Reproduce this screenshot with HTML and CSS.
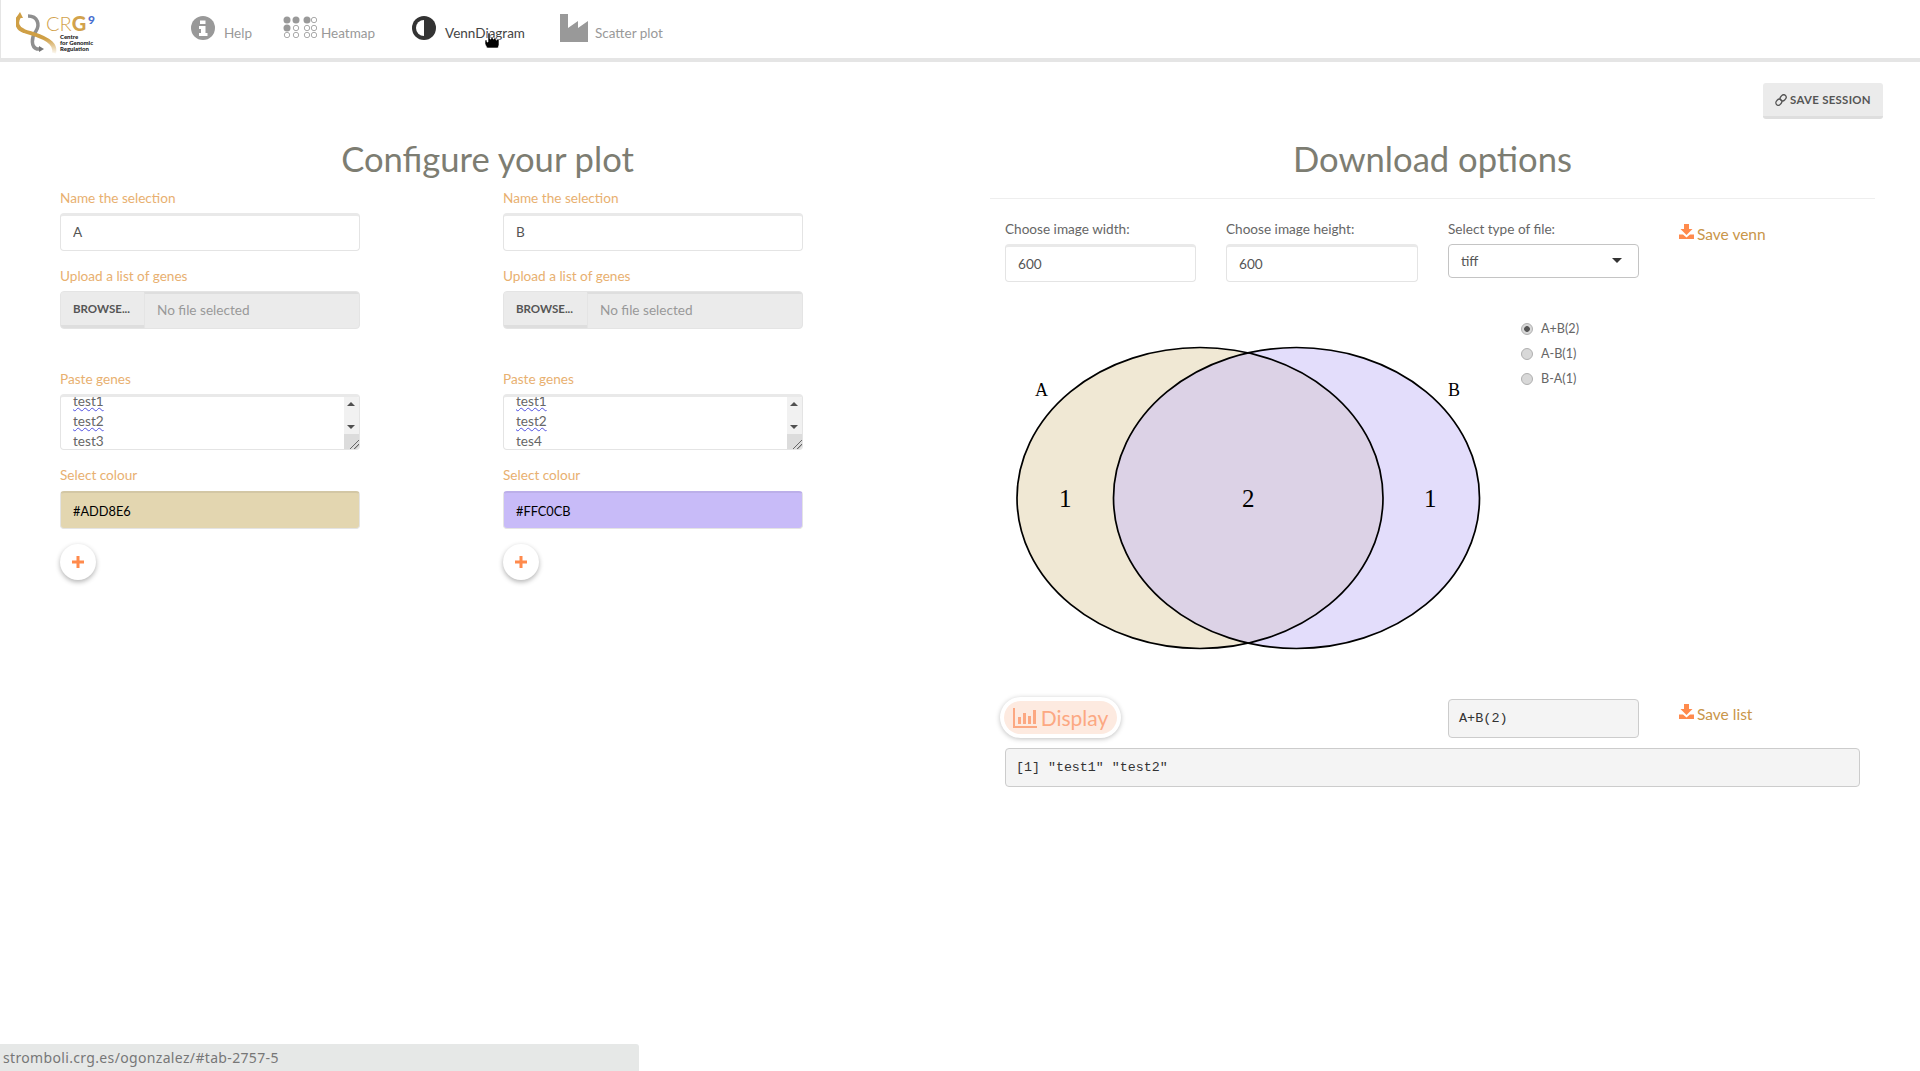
FILE: index.html
```html
<!DOCTYPE html>
<html lang="en">
<head>
  <meta charset="UTF-8">
  <title>VennDiagram</title>
  <link rel="stylesheet" href="styles.css">
</head>

<body>
  <nav class="navbar">
    <svg class="logo" width="80" height="45" viewBox="0 0 80 45">
      <defs>
        <linearGradient id="goldFade" x1="0" y1="0" x2="0" y2="1">
          <stop offset="0.6" stop-color="#cf9f45"/>
          <stop offset="1" stop-color="#cf9f45" stop-opacity="0.1"/>
        </linearGradient>
      </defs>
      <path d="M12 5 C22 5 24 14 20 20 C15 27 15 36 21 38 L24 38" fill="none" stroke="#8f8f8f" stroke-width="3.500"/>
      <path d="M23 35 L28 38 L23 41 Z" fill="#777"/>
      <path d="M3 6 C-1 12 2 18 8 20 C16 23 28 25 35 32 C38 35 39 38 38 42" fill="none" stroke="url(#goldFade)" stroke-width="4"/>
      <path d="M0 7 L4 1 L7 7 Z" fill="#cf9f45"/>
      <text class="logo-crg" x="30" y="20">CR<tspan class="logo-g">G</tspan></text>
      <text class="logo-mark" x="72" y="13">9</text>
      <text class="logo-sub" x="44" y="28">Centre</text>
      <text class="logo-sub" x="44" y="34">for Genomic</text>
      <text class="logo-sub" x="44" y="40">Regulation</text>
    </svg>

    <a class="nav-item nav-help">
      <svg width="24" height="24" viewBox="0 0 24 24">
        <circle cx="12" cy="12" r="12" fill="#999"/>
        <path d="M9 4.500h5.500v3.500H9z M8 10h6.500v7h2v3H8v-3h2v-4H8z" fill="#fff"/>
      </svg>
      <span>Help</span>
    </a>
    <a class="nav-item nav-heatmap">
      <svg width="34" height="22" viewBox="0 0 34 22">
        <g fill="#999">
          <circle cx="4" cy="4" r="3.500"/><circle cx="13" cy="4" r="3.500"/><circle cx="24" cy="4" r="3.500"/>
          <circle cx="4" cy="12" r="3.500"/>
        </g>
        <g fill="none" stroke="#aaa">
          <circle cx="31" cy="4" r="2.700"/>
          <circle cx="13" cy="12" r="2.700"/><circle cx="24" cy="12" r="2.700"/><circle cx="31" cy="12" r="2.700"/>
          <circle cx="4" cy="19" r="2.700"/><circle cx="13" cy="19" r="2.700"/><circle cx="24" cy="19" r="2.700"/><circle cx="31" cy="19" r="2.700"/>
        </g>
      </svg>
      <span>Heatmap</span>
    </a>
    <a class="nav-item nav-venn active">
      <svg width="24" height="24" viewBox="0 0 24 24">
        <circle cx="12" cy="12" r="12" fill="#333"/>
        <path d="M12 4 A8 8 0 0 0 12 20 Z" fill="#fff"/>
      </svg>
      <span>VennDiagram</span>
    </a>
    <a class="nav-item nav-scatter">
      <svg width="28" height="28" viewBox="0 0 28 28">
        <path d="M0 0 H8 V14 L18 7 V14 L28 7 V28 H0 Z" fill="#999"/>
      </svg>
      <span>Scatter plot</span>
    </a>
  </nav>

  <svg class="cursor" width="16" height="18" viewBox="0 0 16 18">
    <path d="M4 1 h2 v6 h1 v-2 h2 v2 h1 v-1 h2 v2 h1 v-1 h2 v6 l-1 3 H3 L1 12 V8 h2 v2 h1 Z" fill="#000" stroke="#fff" stroke-width=".6"/>
  </svg>

  <div class="session-row">
    <button class="session-btn">
      <svg width="12" height="12" viewBox="0 0 12 12">
        <g fill="none" stroke="#555" stroke-width="1.300">
          <rect x="5.500" y="0.500" width="5" height="6.500" rx="2.500" transform="rotate(40 8 4)"/>
          <rect x="1.500" y="5" width="5" height="6.500" rx="2.500" transform="rotate(40 4 8)"/>
        </g>
      </svg>
      SAVE SESSION
    </button>
  </div>

  <main class="columns">
    <section class="config">
      <h2>Configure your plot</h2>
      <div class="selections">
        <div class="selection">
          <div class="field">
            <label>Name the selection</label>
            <input class="text-input" type="text" value="A">
          </div>
          <div class="field field-file">
            <label>Upload a list of genes</label>
            <div class="file-input">
              <span class="browse">BROWSE...</span>
              <span class="file-name">No file selected</span>
            </div>
          </div>
          <div class="field">
            <label>Paste genes</label>
            <div class="textarea">
              <div class="lines">
                <div><u>test1</u></div>
                <div><u>test2</u></div>
                <div>test3</div>
              </div>
              <div class="scroll">
                <span class="arrow-up"></span>
                <span class="arrow-down"></span>
                <span class="resizer"></span>
              </div>
            </div>
          </div>
          <div class="field">
            <label>Select colour</label>
            <div class="colour-input colour-a">#ADD8E6</div>
          </div>
          <button class="add-btn">
            <svg width="12" height="12" viewBox="0 0 12 12"><path d="M4.500 0h3v4.500H12v3H7.500V12h-3V7.500H0v-3h4.500z" fill="#ff8a4c"/></svg>
          </button>
        </div>

        <div class="selection">
          <div class="field">
            <label>Name the selection</label>
            <input class="text-input" type="text" value="B">
          </div>
          <div class="field field-file">
            <label>Upload a list of genes</label>
            <div class="file-input">
              <span class="browse">BROWSE...</span>
              <span class="file-name">No file selected</span>
            </div>
          </div>
          <div class="field">
            <label>Paste genes</label>
            <div class="textarea">
              <div class="lines">
                <div><u>test1</u></div>
                <div><u>test2</u></div>
                <div>tes4</div>
              </div>
              <div class="scroll">
                <span class="arrow-up"></span>
                <span class="arrow-down"></span>
                <span class="resizer"></span>
              </div>
            </div>
          </div>
          <div class="field">
            <label>Select colour</label>
            <div class="colour-input colour-b">#FFC0CB</div>
          </div>
          <button class="add-btn">
            <svg width="12" height="12" viewBox="0 0 12 12"><path d="M4.500 0h3v4.500H12v3H7.500V12h-3V7.500H0v-3h4.500z" fill="#ff8a4c"/></svg>
          </button>
        </div>
      </div>
    </section>

    <section class="download">
      <h2>Download options</h2>
      <hr>
      <div class="dl-grid">
        <div class="dl-field">
          <label>Choose image width:</label>
          <input class="text-input" type="text" value="600">
        </div>
        <div class="dl-field">
          <label>Choose image height:</label>
          <input class="text-input" type="text" value="600">
        </div>
        <div class="dl-field">
          <label>Select type of file:</label>
          <div class="select">tiff<span class="caret"></span></div>
        </div>
        <a class="save-link save-venn">
          <svg width="15" height="15" viewBox="0 0 15 15"><path d="M5 0h5v5h3.500L7.500 11 1.500 5H5z M0 10.500h4l3.500 3 3.500-3h4V15H0z" fill="#ff8a4c"/></svg>
          Save venn
        </a>
      </div>

      <div class="venn-row">
        <svg class="venn" width="500" height="360" viewBox="0 0 500 360">
          <ellipse cx="195" cy="182" rx="183" ry="150.500" fill="#e3d6b0" fill-opacity=".55"/>
          <ellipse cx="291.500" cy="182" rx="183" ry="150.500" fill="#c8bbf8" fill-opacity=".5"/>
          <ellipse cx="195" cy="182" rx="183" ry="150.500" fill="none" stroke="#000" stroke-width="1.700"/>
          <ellipse cx="291.500" cy="182" rx="183" ry="150.500" fill="none" stroke="#000" stroke-width="1.700"/>
          <g class="venn-labels">
            <text x="30" y="80">A</text>
            <text x="443" y="80">B</text>
          </g>
          <g class="venn-counts">
            <text x="54" y="191">1</text>
            <text x="237" y="191">2</text>
            <text x="419" y="191">1</text>
          </g>
        </svg>
        <div class="radios">
          <label class="radio"><input type="radio" name="part" checked>A+B(2)</label>
          <label class="radio"><input type="radio" name="part">A-B(1)</label>
          <label class="radio"><input type="radio" name="part">B-A(1)</label>
        </div>
      </div>

      <div class="dl-grid dl-grid-list">
        <button class="display-btn">
          <span class="display-inner">
            <svg width="24" height="20" viewBox="0 0 24 20"><path d="M0 0h2v18h22v2H0z M5 9h3v7H5z M10 5h3v11h-3z M15 8h3v8h-3z M20 2h3v14h-3z" fill="#fca882"/></svg>
            Display
          </span>
        </button>
        <div></div>
        <div class="picked">A+B(2)</div>
        <a class="save-link save-list">
          <svg width="15" height="15" viewBox="0 0 15 15"><path d="M5 0h5v5h3.500L7.500 11 1.500 5H5z M0 10.500h4l3.500 3 3.500-3h4V15H0z" fill="#ff8a4c"/></svg>
          Save list
        </a>
      </div>
      <pre class="output">[1] "test1" "test2"</pre>
    </section>
  </main>

  <div class="status-bar">stromboli.crg.es/ogonzalez/#tab-2757-5</div>
</body>
</html>
```

FILE: styles.css
```css
* {
  box-sizing: border-box;
}

body {
  font-family: "Lato", sans-serif;
  font-size: 13.600px;
  margin: 0;
  min-height: 1071px;
  background: #fff;
  color: #555;
  overflow: hidden;
}

label {
  display: block;
}

/* top bar */
.navbar {
  display: flex;
  align-items: flex-start;
  height: 62px;
  padding-left: 15px;
  border-left: 1px solid #e5e5e5;
  border-bottom: 4px solid #e5e5e5;
}

.logo {
  display: block;
  flex: none;
  margin-top: 11px;
}

.logo-crg {
  font-family: "Lato", sans-serif;
  font-size: 20px;
  font-weight: 300;
  fill: #d2a24c;
}

.logo-g {
  font-weight: 900;
}

.logo-mark {
  font-family: "Lato", sans-serif;
  font-size: 12px;
  font-weight: 900;
  fill: #4a6fd0;
}

.logo-sub {
  font-family: "Lato", sans-serif;
  font-size: 6px;
  font-weight: 900;
  fill: #222;
}

.nav-item {
  display: flex;
  align-items: flex-start;
  color: #999;
  font-size: 13.500px;
  margin-top: 16px;
}

.nav-item span {
  margin-top: 8px;
  line-height: 18px;
}

.nav-help {
  margin-left: 95px;
  gap: 9px;
}

.nav-heatmap {
  margin-left: 31px;
  gap: 4px;
}

.nav-venn {
  margin-left: 37px;
  gap: 9px;
}

.nav-venn span {
  color: #444;
}

.nav-scatter {
  margin-left: 35px;
  margin-top: 14px;
  gap: 7px;
}

.nav-scatter span {
  margin-top: 10px;
}

.cursor {
  position: absolute;
  left: 484px;
  top: 32px;
}

/* save session */
.session-row {
  display: flex;
  justify-content: flex-end;
  padding: 21px 37px 0 0;
}

.session-btn {
  display: flex;
  align-items: center;
  justify-content: center;
  gap: 3px;
  width: 120px;
  height: 36px;
  background: #ebebeb;
  border: none;
  border-bottom: 3px solid #dedede;
  border-radius: 3px;
  font-family: "Lato", sans-serif;
  font-size: 11.400px;
  font-weight: 700;
  color: #555;
  letter-spacing: .3px;
}

/* columns */
.columns {
  display: flex;
}

h2 {
  margin: 0;
  font-size: 34.600px;
  font-weight: 400;
  line-height: 44px;
  text-align: center;
  color: #7d7d72;
}

.config {
  width: 855px;
  margin-left: 60px;
  padding-top: 18px;
}

.selections {
  display: flex;
  gap: 143px;
  margin-top: 7px;
}

.selection {
  width: 300px;
}

.field {
  margin-bottom: 15px;
}

.field-file {
  margin-bottom: 40px;
}

.field label {
  height: 20px;
  line-height: 20px;
  margin-bottom: 5px;
  color: #e8b070;
}

.text-input {
  display: block;
  width: 100%;
  height: 38px;
  padding: 0 12px 2px;
  background: #fff;
  border: 1px solid #e4e4e4;
  border-top: 3px solid #e9e9e9;
  border-radius: 4px;
  font-family: "Lato", sans-serif;
  font-size: 13.600px;
  color: #555;
}

.file-input {
  display: flex;
  height: 38px;
  border-radius: 4px;
  overflow: hidden;
  background: #ebebeb;
  border: 1px solid #e4e4e4;
}

.browse {
  width: 83px;
  height: 33px;
  line-height: 33px;
  padding-left: 12px;
  background: #ebebeb;
  font-size: 11.500px;
  font-weight: 700;
  color: #555;
  box-shadow: 0 3px 0 #dedede;
}

.file-name {
  flex: 1;
  padding: 6px 0 0 12px;
  line-height: 20px;
  color: #999;
  border-top: 2px solid #dedede;
  border-left: 1px solid #e4e4e4;
}

.textarea {
  display: flex;
  height: 56px;
  border: 1px solid #e4e4e4;
  border-top: 3px solid #e9e9e9;
  border-radius: 4px;
  overflow: hidden;
}

.lines {
  flex: 1;
  padding-left: 12px;
  margin-top: -6px;
  line-height: 20px;
  color: #666;
}

.lines u {
  text-decoration: underline wavy #5050e0 1px;
  text-underline-offset: 1px;
}

.scroll {
  position: relative;
  width: 15px;
  background: #f1f1f1;
}

.arrow-up,
.arrow-down {
  position: absolute;
  left: 3px;
  border-left: 4px solid transparent;
  border-right: 4px solid transparent;
}

.arrow-up {
  top: 5px;
  border-bottom: 4px solid #505050;
}

.arrow-down {
  top: 28px;
  border-top: 4px solid #505050;
}

.resizer {
  position: absolute;
  left: 0;
  right: 0;
  bottom: 0;
  height: 15px;
  background: linear-gradient(135deg, #dcdcdc 68%, #666 69%, #666 72%, #dcdcdc 73%, #dcdcdc 82%, #666 83%, #666 86%, #dcdcdc 87%);
}

.colour-input {
  height: 38px;
  margin-top: 6px;
  padding: 2px 12px 0;
  line-height: 32px;
  border: 1px solid #e4e4e4;
  border-radius: 4px;
  color: #000;
  font-size: 12.800px;
}

.colour-a {
  background: #e3d6b0;
  border-top: 2px solid #d3c7a5;
}

.colour-b {
  background: #c8bbf8;
  border-top: 2px solid #bcafe9;
}

.add-btn {
  display: flex;
  align-items: center;
  justify-content: center;
  width: 36px;
  height: 36px;
  padding: 0;
  background: #fff;
  border: none;
  border-radius: 50%;
  box-shadow: 0 2px 5px rgba(0,0,0,0.3);
}

/* download side */
.download {
  width: 885px;
  margin-left: 75px;
  padding-top: 18px;
}

hr {
  margin: 17px 0 0;
  border: none;
  border-top: 1px solid #eee;
}

.dl-grid {
  display: grid;
  grid-template-columns: 191px 192px 191px auto;
  column-gap: 30px;
  padding-left: 15px;
  margin-top: 20px;
}

.dl-field label {
  height: 20px;
  line-height: 20px;
  margin-bottom: 5px;
  color: #666;
}

.dl-field .text-input {
  padding-bottom: 0;
}

.select {
  position: relative;
  height: 34px;
  padding-left: 12px;
  line-height: 32px;
  border: 1px solid #c4c4c4;
  border-radius: 4px;
  color: #555;
}

.caret {
  position: absolute;
  right: 16px;
  top: 13px;
  border-left: 5px solid transparent;
  border-right: 5px solid transparent;
  border-top: 5px solid #333;
}

.save-link {
  display: flex;
  align-items: flex-start;
  gap: 3px;
  margin-left: 10px;
  font-size: 15.500px;
  line-height: 20px;
  color: #c9964a;
}

.save-venn {
  padding-top: 5px;
}

.save-list {
  padding-top: 7px;
}

.venn-row {
  display: flex;
  margin: 34px 0 0 15px;
}

.venn {
  display: block;
  flex: none;
}

.venn-labels text {
  font-family: "Liberation Serif", serif;
  font-size: 18px;
  fill: #000;
}

.venn-counts text {
  font-family: "Liberation Serif", serif;
  font-size: 25px;
  fill: #000;
}

.radios {
  margin-left: 16px;
}

.radio {
  display: flex;
  align-items: center;
  gap: 8px;
  height: 25px;
  color: #666;
  font-size: 12.600px;
}

.radio input {
  appearance: none;
  width: 12px;
  height: 12px;
  margin: 0;
  border: 1px solid #b0b0b0;
  border-radius: 50%;
  background: #d8d8d8;
}

.radio input:checked {
  background: radial-gradient(circle, #555 0, #555 2.500px, #d8d8d8 3.200px);
}

.dl-grid-list {
  margin-top: 21px;
  align-items: start;
}

.display-btn {
  width: 121px;
  height: 41px;
  margin-left: -5px;
  padding: 4px;
  background: #fff;
  border: none;
  border-radius: 21px;
  box-shadow: 0 1px 5px rgba(0,0,0,0.25);
}

.display-inner {
  display: flex;
  align-items: center;
  justify-content: center;
  gap: 4px;
  height: 33px;
  border-radius: 17px;
  background: #fdeae0;
  font-family: "Lato", sans-serif;
  font-size: 21px;
  color: #fca882;
}

.picked {
  height: 39px;
  margin-top: 2px;
  padding-left: 10px;
  line-height: 37px;
  background: #f4f4f4;
  border: 1px solid #ccc;
  border-radius: 4px;
  font-family: "Liberation Mono", monospace;
  font-size: 13.500px;
  color: #333;
}

.output {
  width: 855px;
  height: 39px;
  margin: 10px 0 0 15px;
  padding: 0 10px;
  line-height: 38px;
  background: #f4f4f4;
  border: 1px solid #ccc;
  border-radius: 4px;
  font-family: "Liberation Mono", monospace;
  font-size: 13.300px;
  color: #333;
}

.status-bar {
  position: fixed;
  left: 0;
  bottom: 0;
  width: 639px;
  height: 27px;
  padding-left: 3px;
  line-height: 28px;
  background: #e6e8e7;
  border-top-right-radius: 3px;
  font-family: "Noto Sans", sans-serif;
  font-size: 14px;
  letter-spacing: .34px;
  color: #777;
}
```
